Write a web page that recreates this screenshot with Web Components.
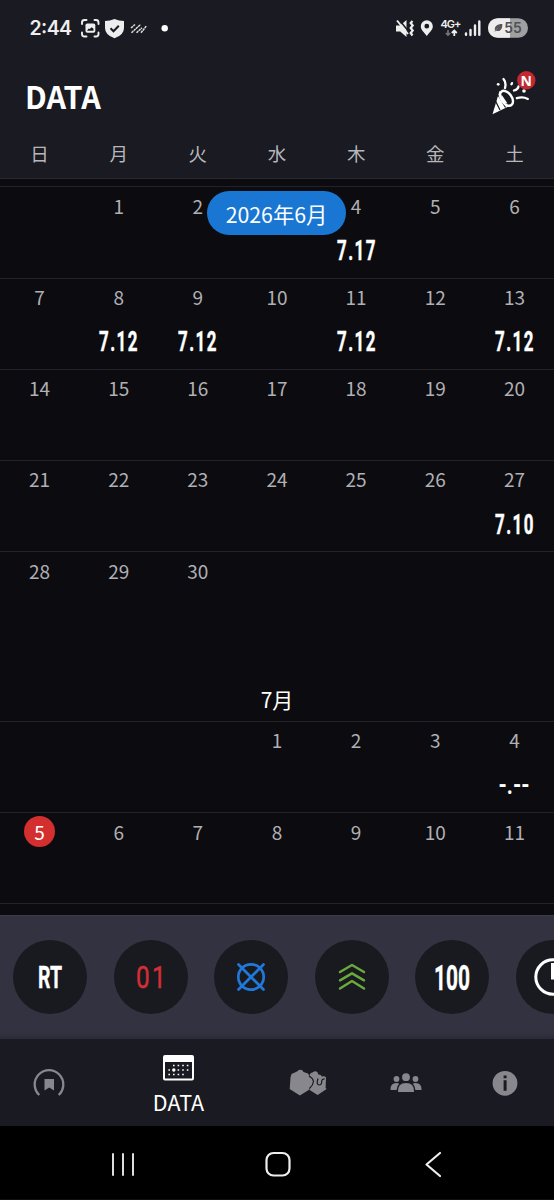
<!DOCTYPE html>
<html lang="ja">
<head>
<meta charset="utf-8">
<title>DATA</title>
<style>
html,body{margin:0;background:#0c0c10}
body{width:554px;height:1200px;overflow:hidden;font-family:"Noto Sans CJK JP",sans-serif;color:#fff}
</style>
</head>
<body>
<data-app></data-app>
<script>
const define = (name, css, html) => customElements.define(name, class extends HTMLElement {
  constructor() {
    super();
    const t = document.createElement('template');
    const body = typeof html === 'function' ? html(this) : html;
    t.innerHTML = `<style>*{box-sizing:border-box}svg{display:block;overflow:visible}${css}</style>${body}`;
    this.attachShadow({mode: 'open'}).append(t.content.cloneNode(true));
  }
});

/* Condensed lettering used for scores and shortcut labels */
define('narrow-text', ':host{display:block}text{font-family:Roboto,sans-serif;font-weight:700}', el => {
  const w = +el.getAttribute('w'), h = +el.getAttribute('h'), ls = el.getAttribute('ls') || 0;
  const fw = el.getAttribute('weight') || 700, c = el.getAttribute('color') || '#fff';
  return `<svg width="${w}" height="${h}"><text x="0" y="${h}" fill="${c}" stroke="${c}" stroke-width="${el.getAttribute('heavy') || 0}"
    style="font-size:${h / 0.711}px;letter-spacing:${ls}px;font-weight:${fw}" textLength="${w}" lengthAdjust="spacingAndGlyphs">${el.getAttribute('text')}</text></svg>`;
});

define('status-bar', ':host{display:flex;justify-content:space-between;height:56px;padding:0 27px 0 30px;align-items:center}', `
<svg width="140" height="24" viewBox="30 16 140 24" fill="#eee">
  <text x="29.5" y="35.2" font-family="Inter,sans-serif" font-weight="600" font-size="19.5" textLength="42.5">2:44</text>
  <g fill="none" stroke="#eee" stroke-width="1.9" stroke-linecap="round"><path d="M82 24v-1.5q0-2.5 2.500-2.500h2M94.500 20h1.500q2.500 0 2.500 2.500v1.500M98.500 32.500v1.500q0 2.500-2.500 2.500h-1.500M86.500 36.500h-2q-2.500 0-2.500-2.500v-1.500"/></g>
  <rect x="85.500" y="23.500" width="9.800" height="9.300" rx="1.800"/><path d="M87 30.800h6.500v-2l-1.800-1.500-2 1.700-1-.6z" fill="#1a1a22"/>
  <path d="M105 21q5-.2 9.500-2 4.500 1.800 9.500 2v7q0 7-9.500 10.200Q105 35 105 28z"/><path d="M110.500 28.300l3 3 5.300-5.500" fill="none" stroke="#1a1a22" stroke-width="2"/>
  <g stroke="#ddd" stroke-width="1.500" stroke-dasharray="2.500 .5"><path d="M131 28l4-3.500M131.500 32.800l9-8.300M136.500 32.800l5.500-5M141 32.800l5.500-7"/></g>
  <circle cx="164.700" cy="28.300" r="3.200" fill="#fff"/>
</svg>
<svg width="133" height="24" viewBox="394 16 133 24" fill="#eee">
  <path d="M396 25.500h4.200l6.300-5.500v17l-6.300-5.500H396z"/><path d="M399 19.500l10 12.500" stroke="#1a1a22" stroke-width="1.500"/><path d="M397 20.500l11 13.500" stroke="#eee" stroke-width="1.900"/>
  <path d="M412.500 21l-1.800 2 2 2.500-2 2.500 2 2.500-2 2.500 1.800 2.500" fill="none" stroke="#eee" stroke-width="2.200"/>
  <path fill-rule="evenodd" d="M426.800 20.300a6 6 0 0 1 6 6c0 4-3.500 6-6 9.700-2.500-3.700-6-5.700-6-9.700a6 6 0 0 1 6-6zm0 3.500a2.400 2.400 0 1 0 0 4.800 2.400 2.400 0 0 0 0-4.800z"/>
  <text x="440.500" y="27.800" font-family="Inter,sans-serif" font-weight="600" font-size="11" textLength="21">4G+</text>
  <path d="M448 30v5M445.800 33l2.200 2.200 2.200-2.200" stroke="#777" stroke-width="1.600" fill="none"/><path d="M454.300 36v-5M451.800 33l2.500-2.500 2.500 2.500" stroke="#eee" stroke-width="1.800" fill="none"/>
  <g stroke="#eee" stroke-width="2.400" stroke-linecap="round"><path d="M466 33.500v1.300M470.500 30v5"/><path d="M475 25.500v9.300M479.300 21.500v13.300"/></g>
  <rect x="488" y="18.200" width="40" height="19.600" rx="9.800" fill="#a0a0a2"/><path d="M510 18.200h-12.200a9.800 9.800 0 0 0 0 19.600H510z" fill="#ededed"/>
  <path d="M495 30.500c-1-4 2-6.500 7.300-6.500.3 4.500-1.800 8-5.800 6.800l-2.500 1 5-4.500z" fill="#55555a"/>
  <text x="504.300" y="33.400" fill="#505056" font-family="Inter,sans-serif" font-weight="600" font-size="14.500" textLength="17.500" lengthAdjust="spacingAndGlyphs">55</text>
</svg>`);

define('page-header', `:host{display:block;height:179px;background:#1a1a22;border-bottom:1px solid #2b2930}
.t{display:flex;justify-content:space-between;height:82px;padding:0 18px 0 25px;align-items:center}
h1{margin:0 0 3px;font-size:30.500px;line-height:44px;font-weight:700}
.w{display:grid;grid-template-columns:repeat(7,1fr);text-align:center;font-size:18.5px;line-height:28px;color:#b7b7bb;padding-top:1px}`, `
<status-bar></status-bar>
<div class="t"><h1>DATA</h1>
<svg width="46" height="48" viewBox="490 68 46 48" style="margin-bottom:10px">
  <path d="M499.500 91L492.500 114.200 513.500 104z" fill="#fff"/>
  <path d="M495.500 101l4.500 9M498 95l7.500 12.500" stroke="#1a1a22" stroke-width="1.200"/>
  <ellipse cx="506.500" cy="98.300" rx="5.200" ry="8.400" transform="rotate(-36 506.500 98.300)" fill="#1a1a22" stroke="#fff" stroke-width="2.400"/>
  <path d="M501.500 94.500l6 9-3.500-.5-3-5z" fill="#fff"/>
  <g fill="none" stroke="#fff" stroke-width="2.300" stroke-linecap="round"><path d="M503.500 79q3 3.500 1.500 9M514 90.500q4-1 4.500-4M516.800 98.200q6-2 11 .7M511.500 84.300l.5-1.200"/></g>
  <circle cx="498.200" cy="84.300" r="1.400" fill="#fff"/><circle cx="524" cy="91" r="1.800" fill="#fff"/>
  <circle cx="526.300" cy="80.300" r="9.200" fill="#c3272f"/>
  <text x="526.300" y="85.500" text-anchor="middle" font-family="Noto Sans,sans-serif" font-size="14" font-weight="700" fill="#fff">N</text>
</svg></div>
<div class="w"><span>日</span><span>月</span><span>火</span><span>水</span><span>木</span><span>金</span><span>土</span></div>`);

define('day-cell', `:host{display:flex;flex-direction:column;align-items:center;height:100%;padding-top:2.500px;color:#b0b0b5;font-size:19px;line-height:31px}
.d{width:31px;height:31px;text-align:center;white-space:nowrap;border-radius:50%;line-height:32px}
:host([today]) .d{background:#d32f2f;color:#fff;line-height:31px}
narrow-text{margin:19.300px 0 0 1px}`, el => {
  const s = el.getAttribute('score');
  return `<div class="d">${el.getAttribute('day') || ''}</div>` +
    (s === '-.--' ? `<svg width="32" height="22" style="margin-top:20px"><text x="0.500" y="18.500" fill="#fff" font-family="Roboto" font-weight="700" font-size="25" textLength="31" lengthAdjust="spacingAndGlyphs">-.--</text></svg>`
     : s ? `<narrow-text w="40" h="20" ls="2.500" heavy=".5" text="${s}"></narrow-text>` : '');
});

define('week-row', ':host{display:grid;grid-template-columns:repeat(7,1fr);height:91.2px;border-top:1px solid #232228}', el => {
  const first = +el.getAttribute('first'), last = +el.getAttribute('last'), covered = el.getAttribute('covered');
  const scores = Object.fromEntries((el.getAttribute('scores') || '').split(' ').filter(Boolean).map(p => p.split('=')));
  let out = '';
  for (let i = 0; i < 7; i++) {
    const d = first + i;
    out += d > 0 && d <= last && d != covered ? `<day-cell day="${d}"${scores[d] ? ` score="${scores[d]}"` : ''}${el.getAttribute('today') == d ? ' today' : ''}></day-cell>` : '<day-cell></day-cell>';
  }
  return out;
});

define('month-calendar', `:host{display:block;height:736px;padding-top:7.400px;background:#0c0c10;position:relative;overflow:hidden}
.m{height:78.500px;text-align:center;font-size:21px;line-height:30px;padding-top:41.500px}
.end{border-top:1px solid #232228}
.pill{position:absolute;left:207px;top:12px;width:139px;height:44px;border-radius:22px;background:#1976d2;text-align:center;font-size:21.300px;line-height:45px}`, `
<week-row first="0" last="30" covered="3" scores="4=7.17"></week-row>
<week-row first="7" last="30" scores="8=7.12 9=7.12 11=7.12 13=7.12"></week-row>
<week-row first="14" last="30"></week-row>
<week-row first="21" last="30" scores="27=7.10"></week-row>
<week-row first="28" last="30"></week-row>
<div class="m">7月</div>
<week-row first="-2" last="31" scores="4=-.--"></week-row>
<week-row first="5" last="31" today="5"></week-row>
<div class="end"></div>
<div class="pill">2026年6月</div>`);

define('round-button', ':host{display:flex;flex:none;width:74px;height:74px;border-radius:50%;background:#191920;align-items:center;justify-content:center}', '<slot></slot>');

define('shortcut-bar', ':host{display:flex;gap:26.600px;height:124px;padding:24px 0 0 13px;overflow:hidden;background:linear-gradient(#333241 0 116px,#2b2a37);border-top:1px solid #3b3a46}', `
<round-button><narrow-text w="24" h="22" heavy=".3" text="RT"></narrow-text></round-button>
<round-button><narrow-text w="32" h="22" ls="3" weight="400" heavy=".5" color="#d32f35" text="01" style="margin-left:2px"></narrow-text></round-button>
<round-button><svg width="30" height="30" viewBox="0 0 30 30" fill="none" stroke="#2079d8" stroke-width="2.700" stroke-linecap="round"><circle cx="15" cy="15" r="12.700"/><path d="M2.500 2.500l25 25M27.500 2.500l-25 25"/></svg></round-button>
<round-button><svg width="28" height="28" viewBox="0 0 28 28" fill="none" stroke="#69aa3b" stroke-width="2.500" stroke-linecap="round" stroke-linejoin="round"><path d="M2 9l12-7L26 9M2 17.300l12-7 12 7M2 25.500l12-7.500 12 7.500"/></svg></round-button>
<round-button><narrow-text w="36" h="25" heavy=".4" text="100"></narrow-text></round-button>
<round-button><svg width="38" height="38" viewBox="0 0 38 38" fill="none" stroke="#fff" stroke-width="3"><circle cx="19" cy="19" r="17.200"/><path d="M18.500 5v15h9"/></svg></round-button>`);

define('tab-item', ':host{display:flex;flex-direction:column;align-items:center;justify-content:center;color:#88878d;font-size:21.500px;line-height:28px}', '<slot name="icon"></slot><slot></slot>');

define('tab-bar', ':host{display:grid;grid-template-columns:98px 161px 98px 98px 99px;height:87px;background:#1a1a22}.on{color:#fff;padding-top:5px}.g{fill:#88878d}', `
<tab-item><svg slot="icon" width="32" height="30" viewBox="33 1068 32 30"><path d="M39.300 1095a14.300 14.300 0 1 1 19.400 0" fill="none" stroke="#88878d" stroke-width="2.300"/><path class="g" d="M44.500 1079h9.500v11.500l-4.750-3-4.750 3z"/></svg></tab-item>
<tab-item class="on"><svg slot="icon" width="31" height="26" viewBox="0 0 31 26" style="margin-bottom:7px"><rect x="1" y="1" width="29" height="23.500" rx="1" fill="none" stroke="#fff" stroke-width="2"/><path d="M1 1h29v6H1z" fill="#fff"/><g fill="#fff"><path d="M10 9.700h1.600v1.600H10zM14.600 9.700h1.600v1.600h-1.600zM19.200 9.700h1.600v1.600h-1.600zM23.800 9.700h1.600v1.600h-1.600zM5.400 14.200H7v1.600H5.400zM14.600 14.200h1.600v1.600h-1.600zM19.200 14.200h1.600v1.600h-1.600zM23.800 14.200h1.600v1.600h-1.600zM5.400 18.700H7v1.600H5.400zM10 18.700h1.600v1.600H10zM14.600 18.700h1.600v1.600h-1.600zM19.200 18.700h1.600v1.600h-1.600z"/><circle cx="10.800" cy="15" r="1.700"/></g></svg>DATA</tab-item>
<tab-item><svg slot="icon" width="37" height="26" viewBox="289.500 1070.500 37 26"><path class="g" d="M309 1077q0-4 3.500-4.300 2-1.800 4.500 0l.8 2.300q3-.2 3.500 2 4.500-.8 4.200 2l-.4 9.500 1 1-9 6-8-5v-4q3-2 3-6z"/><path class="g" d="M290 1078l1-3.500 5.500-2.500q1.500-2 3.500-1.800 2.200 0 3 2.300l4.500 1.500q1 1 1.200 2.500 3.200 2 4.200 5.500-.5 4-4 6.800l-.3 1.400-9.200 5.800-10.200-6.500z"/><path d="M308.500 1076.500q3.800 2 4.500 5.500-.5 4-4 7" fill="none" stroke="#1a1a22" stroke-width="1.200"/><path d="M317.500 1079q-2 6 1 6.500 3 0 2.700-4 .3-2.300 3-2" fill="none" stroke="#1a1a22" stroke-width="1.200"/></svg></tab-item>
<tab-item><svg slot="icon" width="32" height="20" viewBox="0 0 32 20" class="g"><circle cx="16" cy="4.200" r="3.900"/><circle cx="6.500" cy="6" r="2.900"/><circle cx="25.500" cy="6" r="2.900"/><path d="M8 19q-.5-9 8-9t8 9zM.500 17q-.3-7 6-7 1.700 0 2.700.8-2.300 2-2.600 6.200zM31.500 17q.3-7-6-7-1.700 0-2.700.8 2.300 2 2.600 6.200z"/></svg></tab-item>
<tab-item><svg slot="icon" width="26" height="26" viewBox="0 0 26 26"><circle class="g" cx="13" cy="13.300" r="12.400"/><path d="M11.600 5.500h3v2.800h-3zM11.600 10.300h3v10.400h-3z" fill="#1a1a22"/></svg></tab-item>`);

define('system-nav', ':host{display:grid;grid-template-columns:246px 64px 246px;justify-items:center;align-items:center;height:74px;background:#000;padding-top:3px;border-bottom:1px solid #101014}', `
<svg width="24" height="26" viewBox="0 0 24 26" stroke="#ddd" stroke-width="2" stroke-linecap="round"><path d="M2 3v21M12 3v21M22 3v21"/></svg>
<svg width="26" height="26" viewBox="0 0 26 26" fill="none" stroke="#eee" stroke-width="2.200"><rect x="1.500" y="2" width="23" height="22.500" rx="7"/></svg>
<svg width="16" height="26" viewBox="0 0 16 26" fill="none" stroke="#eee" stroke-width="2.200" stroke-linecap="round" stroke-linejoin="round"><path d="M15 2L1.500 13.500l13.500 11.500"/></svg>`);

define('data-app', ':host{display:flex;flex-direction:column;width:554px;height:1200px;overflow:hidden}', `
<page-header></page-header><month-calendar></month-calendar><shortcut-bar></shortcut-bar><tab-bar></tab-bar><system-nav></system-nav>`);
</script>
</body>
</html>
